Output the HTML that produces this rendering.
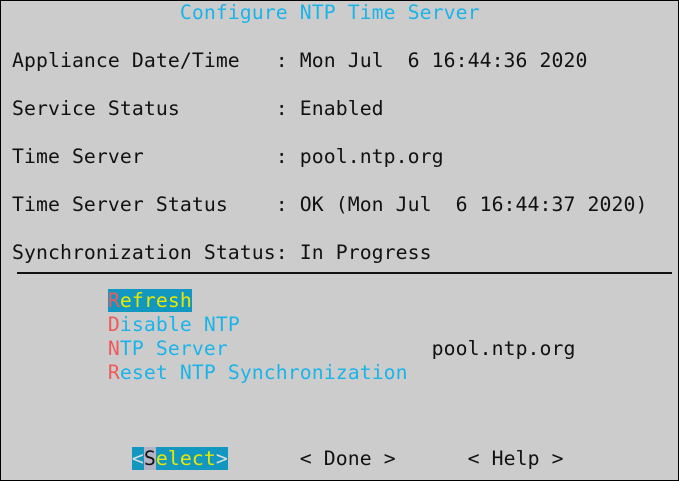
<html><head><style>
body{margin:0;width:679px;height:481px;overflow:hidden;background:#ccc}
#b{position:absolute;left:0;top:0;width:677px;height:479px;border:1px solid #000;background:#cccccc}
.r{position:absolute;left:11px;font-family:"DejaVu Sans Mono","Liberation Mono",monospace;font-size:19.8px;letter-spacing:0.08px;line-height:24px;white-space:pre;color:#111}
.c{color:#1cb4e8}.k{color:#f05a5a}.y{color:#e8e800}.h{background:#1297c0}
#hr{position:absolute;left:16px;top:271px;width:655px;height:2px;background:#111}
</style></head><body><div id="b">
<div class="r c" style="top:0px">              Configure NTP Time Server</div>
<div class="r" style="top:48px">Appliance Date/Time   : Mon Jul  6 16:44:36 2020</div>
<div class="r" style="top:96px">Service Status        : Enabled</div>
<div class="r" style="top:144px">Time Server           : pool.ntp.org</div>
<div class="r" style="top:192px">Time Server Status    : OK (Mon Jul  6 16:44:37 2020)</div>
<div class="r" style="top:240px">Synchronization Status: In Progress</div>
<div id="hr"></div>
<div class="r" style="top:288px">        <span class="h"><span class="k">R</span><span class="y">efresh</span></span></div>
<div class="r" style="top:312px">        <span class="k">D</span><span class="c">isable NTP</span></div>
<div class="r" style="top:336px">        <span class="k">N</span><span class="c">TP Server</span>                 pool.ntp.org</div>
<div class="r" style="top:360px">        <span class="k">R</span><span class="c">eset NTP Synchronization</span></div>
<div class="r" style="top:446px">          <span class="h"><span style="color:#ddd">&lt;</span><span style="background:#b4b4c4;color:#111">S</span><span class="y">elect</span><span style="color:#ddd">&gt;</span></span>      &lt; Done &gt;      &lt; Help &gt;</div>
</div></body></html>
